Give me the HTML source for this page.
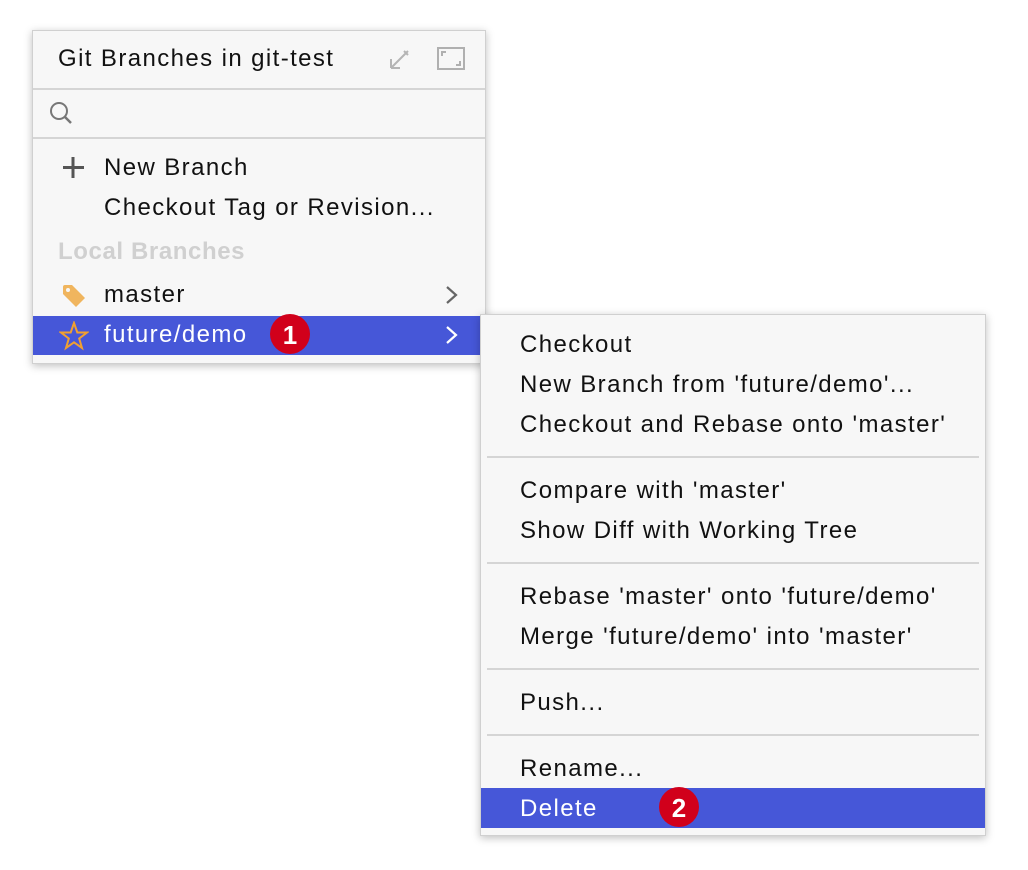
<!DOCTYPE html>
<html><head><style>
body{margin:0;width:1028px;height:870px;background:#fff;position:relative;font-family:"Liberation Sans",sans-serif;overflow:hidden}
.p{position:absolute;background:#f7f7f7;box-shadow:0 2px 8px rgba(0,0,0,.25);border:1px solid #d0d0d0}
.t{position:absolute;font-size:24px;letter-spacing:1.4px;color:#111;white-space:nowrap;line-height:28px}
.sel{position:absolute;background:#4657d8}
.sep{position:absolute;height:2px;background:#d5d5d5}
.badge{position:absolute;width:40px;height:40px;border-radius:50%;background:#d1001b;color:#fff;font-size:26px;font-weight:bold;text-align:center;line-height:42px}
</style></head><body>
<div class="p" style="left:32px;top:30px;width:452px;height:332px">
 <div class="t" style="left:25px;top:14px">Git Branches in git-test</div>
 <svg style="position:absolute;left:355px;top:17px" width="24" height="24"><path d="M3 20 L20 3 M3 20 V11 M3 20 H12 M9 14 L20 3 M16 3 L20 7" stroke="#b5b5b5" stroke-width="2" fill="none"/></svg>
 <div style="position:absolute;left:404px;top:16px;width:24px;height:19px;border:2px solid #b0b0b0"></div>
 <svg style="position:absolute;left:406px;top:18px" width="24" height="19"><path d="M3 7 V3 H7 M21 12 V16 H17" stroke="#b0b0b0" stroke-width="2" fill="none"/></svg>
 <div class="sep" style="left:0;top:57px;width:452px"></div>
 <svg style="position:absolute;left:16px;top:70px" width="26" height="26"><circle cx="10" cy="10" r="8" stroke="#777" stroke-width="2" fill="none"/><path d="M16 16 L22 22" stroke="#777" stroke-width="2.5"/></svg>
 <div class="sep" style="left:0;top:106px;width:452px"></div>
 <svg style="position:absolute;left:30px;top:126px" width="22" height="22"><path d="M10 0 V21 M0 10.5 H21" stroke="#555" stroke-width="3"/></svg>
 <div class="t" style="left:71px;top:123px">New Branch</div>
 <div class="t" style="left:71px;top:163px">Checkout Tag or Revision...</div>
 <div class="t" style="left:25px;top:207px;color:#d0d0d0;font-weight:bold;letter-spacing:0.6px">Local Branches</div>
 <svg style="position:absolute;left:28px;top:252px" width="26" height="26"><path d="M2 4 Q2 2 4 2 H11 L24 15 L15 24 L2 11 Z" fill="#f0b55e"/><circle cx="7" cy="7" r="2" fill="#f7f7f7"/></svg>
 <div class="t" style="left:71px;top:250px">master</div>
 <svg style="position:absolute;left:412px;top:254px" width="14" height="20"><path d="M2 2 L11 10 L2 18" stroke="#666" stroke-width="2.2" fill="none"/></svg>
 <div class="sel" style="left:0;top:285px;width:452px;height:39px"></div>
 <svg style="position:absolute;left:26px;top:290px" width="30" height="30"><path d="M15 2 L18.3 11.5 L28 11.5 L20.2 17.5 L23 27 L15 21.3 L7 27 L9.8 17.5 L2 11.5 L11.7 11.5 Z" stroke="#f0a030" stroke-width="2" fill="none"/></svg>
 <div class="t" style="left:71px;top:290px;color:#fff">future/demo</div>
 <div class="badge" style="left:237px;top:283px">1</div>
 <svg style="position:absolute;left:412px;top:294px" width="14" height="20"><path d="M2 2 L11 10 L2 18" stroke="#fff" stroke-width="2.2" fill="none"/></svg>
</div>
<div class="p" style="left:480px;top:314px;width:504px;height:520px">
 <div class="t" style="left:39px;top:16px">Checkout</div>
 <div class="t" style="left:39px;top:56px">New Branch from 'future/demo'...</div>
 <div class="t" style="left:39px;top:96px">Checkout and Rebase onto 'master'</div>
 <div class="sep" style="left:6px;top:141px;width:492px"></div>
 <div class="t" style="left:39px;top:162px">Compare with 'master'</div>
 <div class="t" style="left:39px;top:202px">Show Diff with Working Tree</div>
 <div class="sep" style="left:6px;top:247px;width:492px"></div>
 <div class="t" style="left:39px;top:268px">Rebase 'master' onto 'future/demo'</div>
 <div class="t" style="left:39px;top:308px">Merge 'future/demo' into 'master'</div>
 <div class="sep" style="left:6px;top:353px;width:492px"></div>
 <div class="t" style="left:39px;top:374px">Push...</div>
 <div class="sep" style="left:6px;top:419px;width:492px"></div>
 <div class="t" style="left:39px;top:440px">Rename...</div>
 <div class="sel" style="left:0;top:473px;width:504px;height:40px"></div>
 <div class="t" style="left:39px;top:480px;color:#fff">Delete</div>
 <div class="badge" style="left:178px;top:472px">2</div>
</div>
</body></html>
